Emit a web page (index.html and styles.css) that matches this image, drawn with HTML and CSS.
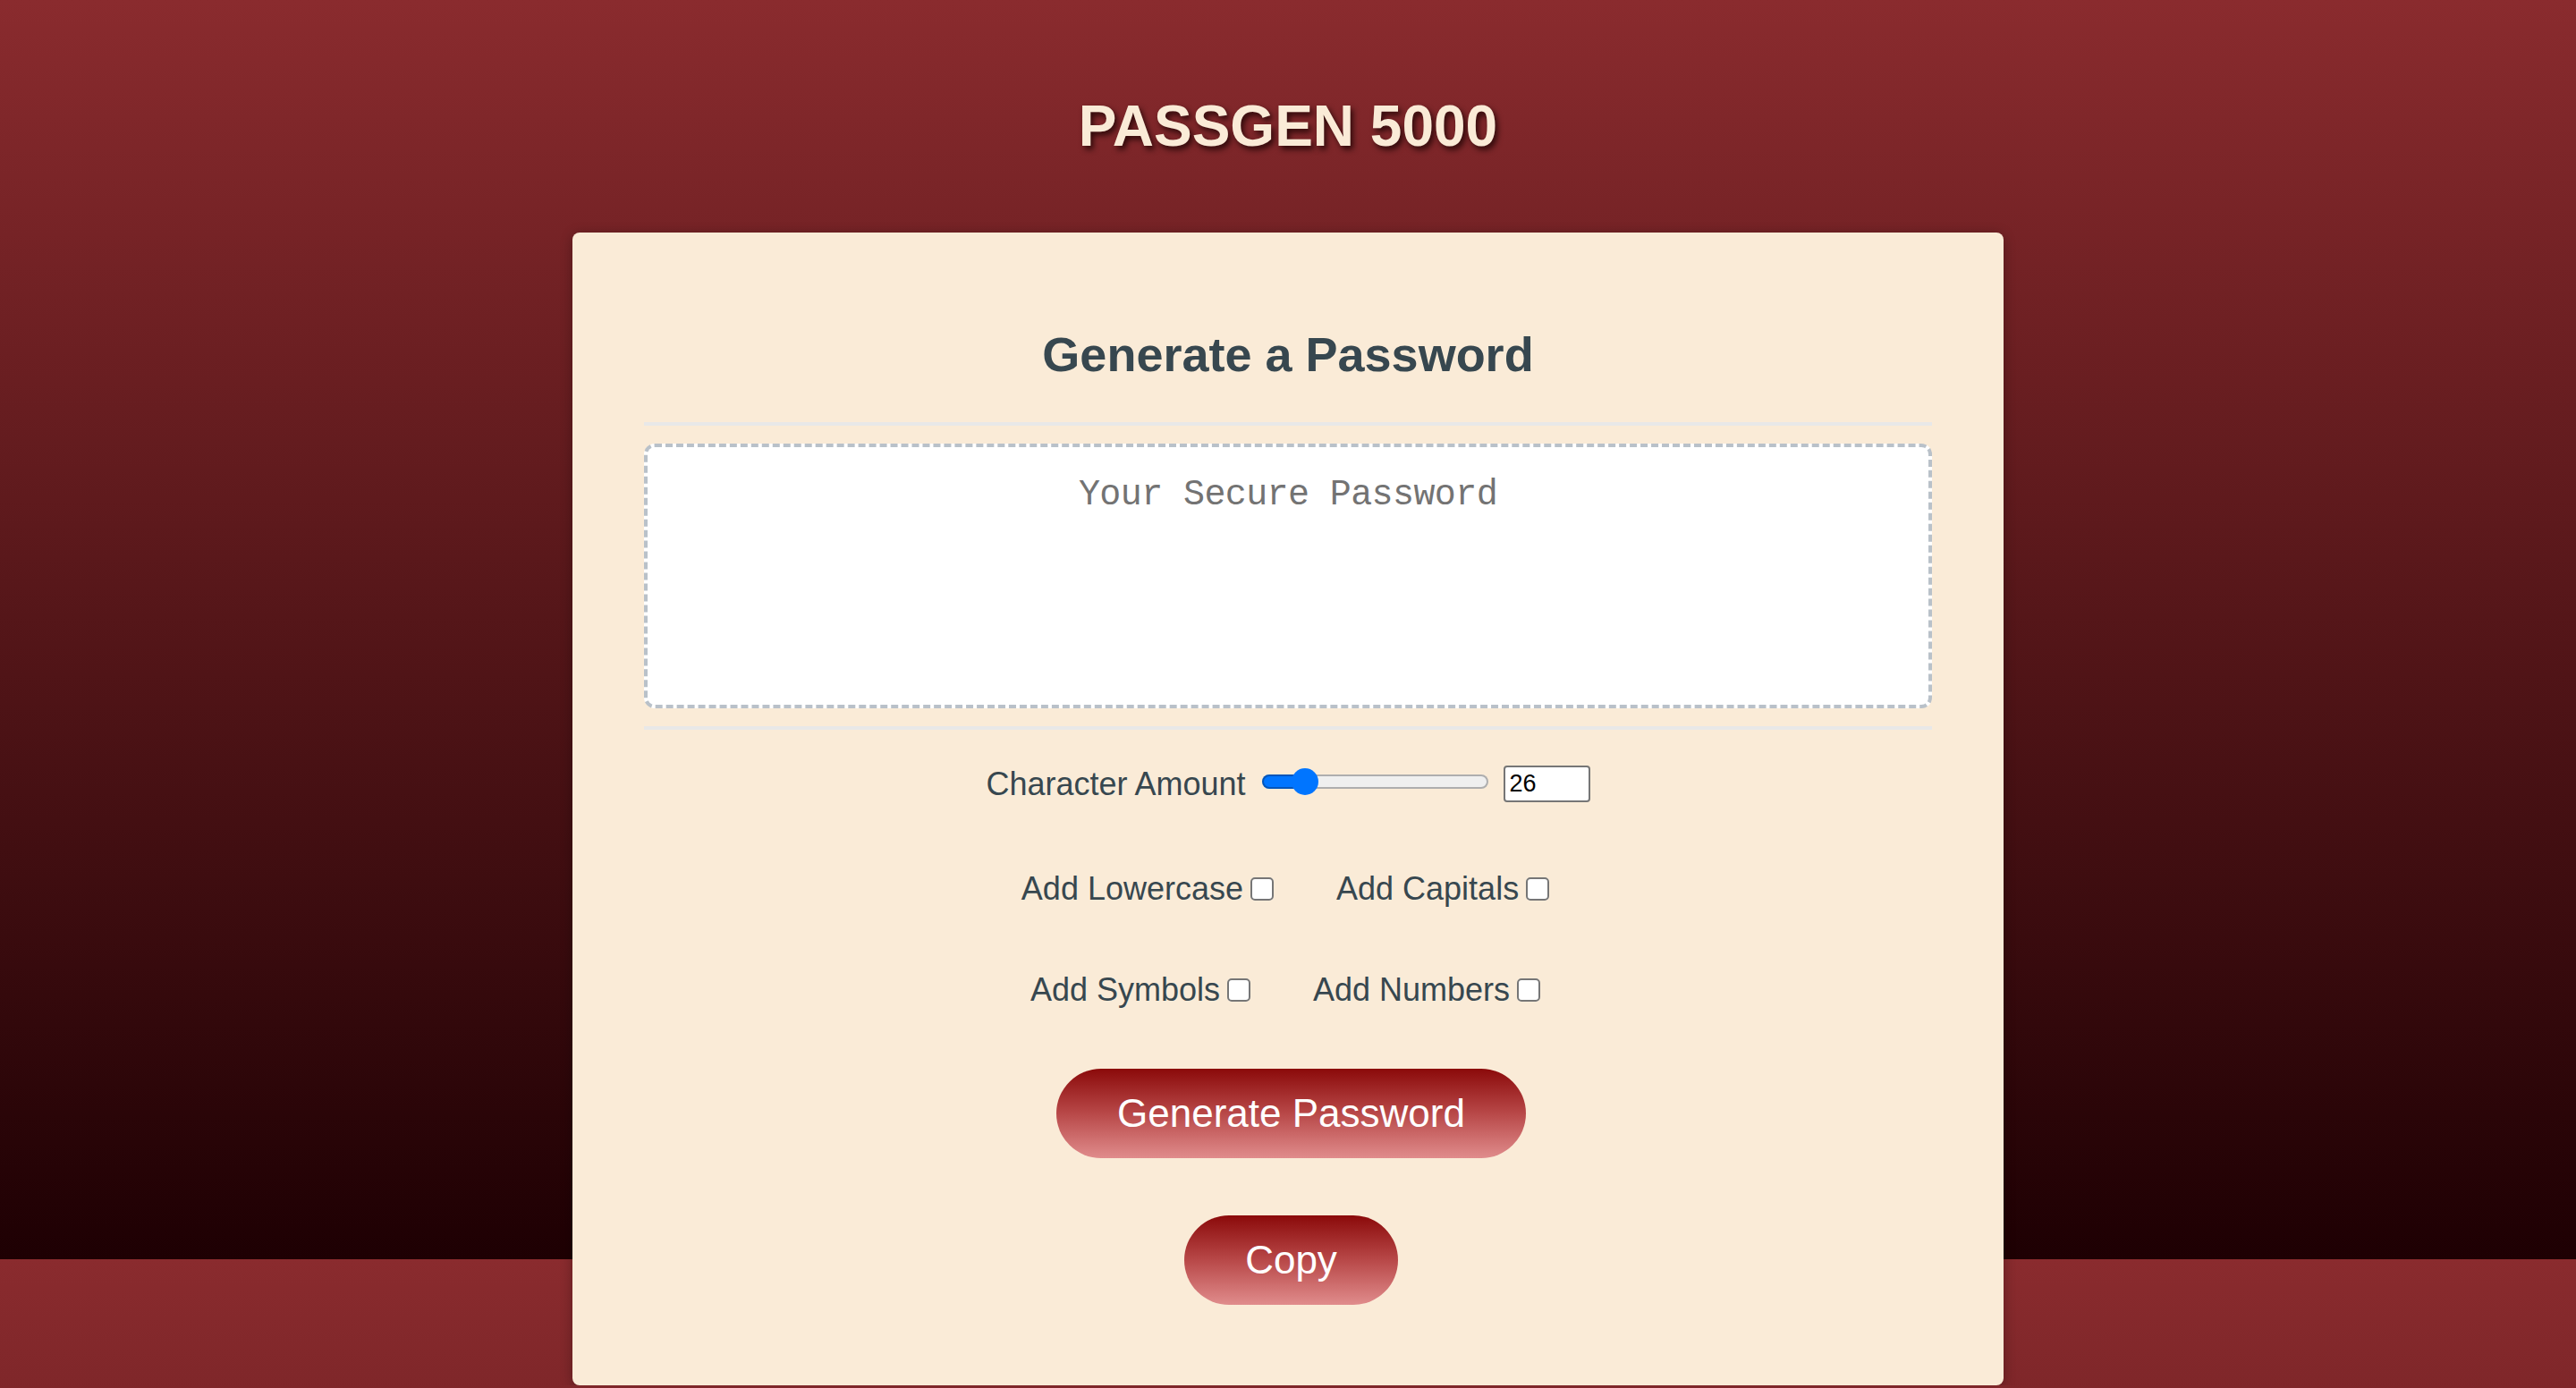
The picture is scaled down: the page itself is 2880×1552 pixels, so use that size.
FILE: index.html
```html
<!DOCTYPE html>
<html lang="en">
<head>
<meta charset="utf-8">
<title>PassGen 5000</title>
<link rel="stylesheet" href="styles.css">
</head>
<body>
  <header class="site-header">
    <h1 class="site-title">PASSGEN 5000</h1>
  </header>
  <main class="card">
    <h2 class="card-title">Generate a Password</h2>
    <hr class="divider divider-top">
    <textarea class="password-output" readonly placeholder="Your Secure Password"></textarea>
    <hr class="divider divider-bottom">
    <div class="amount-row">
      <label class="amount-label" for="amount-range">Character Amount</label>
      <input class="amount-range" id="amount-range" type="range" min="8" max="128" value="26" style="--fill: 18.6%">
      <input class="amount-number" type="number" min="8" max="128" value="26">
    </div>
    <div class="option-row option-row-first">
      <label class="option">Add Lowercase<input class="option-box" type="checkbox"></label>
      <label class="option">Add Capitals<input class="option-box" type="checkbox"></label>
    </div>
    <div class="option-row option-row-second">
      <label class="option">Add Symbols<input class="option-box" type="checkbox"></label>
      <label class="option">Add Numbers<input class="option-box" type="checkbox"></label>
    </div>
    <div class="actions">
      <button class="btn btn-generate" type="button">Generate Password</button>
      <button class="btn btn-copy" type="button">Copy</button>
    </div>
  </main>
</body>
</html>
```

FILE: styles.css
```css
html {
  background-image: linear-gradient(180deg, #8a2b2e 0%, #1e0003 100%);
  background-size: 100% 1408px;
  background-repeat: repeat-y;
  background-color: #1e0003;
}

body {
  margin: 0;
  font-family: "Liberation Sans", Arial, Helvetica, sans-serif;
  color: #37474f;
}

.site-header {
  padding-top: 104px;
}

.site-title {
  margin: 0;
  font-size: 64px;
  line-height: 74px;
  font-weight: 700;
  text-align: center;
  color: #faebd7;
  text-shadow: 3px 4px 6px rgba(20, 0, 0, 0.75);
}

.card {
  box-sizing: border-box;
  width: 1600px;
  margin: 82px auto 0;
  padding: 104px 80px 90px;
  background: #faebd7;
  border-radius: 8px;
  box-shadow: 0 2px 14px rgba(0, 0, 0, 0.3);
}

.card-title {
  margin: 0;
  font-size: 54px;
  line-height: 64px;
  font-weight: 700;
  text-align: center;
  color: #37474f;
}

.divider {
  margin: 0;
  height: 4px;
  border: 0;
  background: #e8e8e8;
}

.divider-top {
  margin: 44px 0 20px;
}

.divider-bottom {
  margin: 20px 0 0;
}

.password-output {
  display: block;
  box-sizing: border-box;
  width: 100%;
  height: 296px;
  margin: 0;
  padding: 31px 30px;
  border: 4px dashed #b9c1c9;
  border-radius: 12px;
  background: #ffffff;
  font-family: "Liberation Mono", "Courier New", monospace;
  font-size: 40px;
  letter-spacing: -0.6px;
  text-align: center;
  color: #333333;
  resize: none;
  outline: none;
}

.password-output::placeholder {
  color: #737373;
}

.amount-row {
  display: flex;
  justify-content: center;
  align-items: center;
  margin-top: 40px;
}

.amount-label {
  font-size: 36px;
  line-height: 41px;
}

.amount-range {
  -webkit-appearance: none;
  appearance: none;
  width: 253px;
  height: 32px;
  margin: -6px 17px 0 18px;
  padding: 0;
  background: transparent;
}

.amount-range::-webkit-slider-runnable-track {
  box-sizing: border-box;
  height: 16px;
  border: 0;
  border-radius: 8px;
  background: linear-gradient(to right, #0075ff var(--fill), #efefef var(--fill));
  box-shadow: inset 0 0 0 2px rgba(0, 0, 0, 0.27);
}

.amount-range::-webkit-slider-thumb {
  -webkit-appearance: none;
  appearance: none;
  width: 30px;
  height: 30px;
  margin-top: -7px;
  border: 0;
  border-radius: 50%;
  background: #0075ff;
}

.amount-number {
  box-sizing: border-box;
  width: 97px;
  height: 41px;
  margin: 0;
  padding: 0 5px;
  border: 2px solid #767676;
  border-radius: 4px;
  background: #ffffff;
  font-family: "Liberation Sans", Arial, sans-serif;
  font-size: 27px;
  color: #000000;
}

.option-row {
  display: flex;
  justify-content: center;
  align-items: center;
}

.option-row-first {
  margin-top: 76px;
}

.option-row-second {
  margin-top: 72px;
}

.option {
  display: inline-flex;
  align-items: center;
  margin: 0 32px;
  font-size: 36px;
  line-height: 41px;
}

.option-box {
  zoom: 2;
  margin: 3px 3px 3px 4px;
}

.actions {
  padding-left: 7px;
}

.btn {
  display: block;
  box-sizing: border-box;
  height: 100px;
  margin: 0 auto;
  padding: 0 68px;
  border: 0;
  border-radius: 50px;
  background: linear-gradient(180deg, #8b0a0a 0%, #b84848 50%, #e08c8c 100%);
  font-family: "Liberation Sans", Arial, sans-serif;
  font-size: 44px;
  color: #ffffff;
  cursor: pointer;
}

.btn-generate {
  margin-top: 68px;
}

.btn-copy {
  margin-top: 64px;
}
```
